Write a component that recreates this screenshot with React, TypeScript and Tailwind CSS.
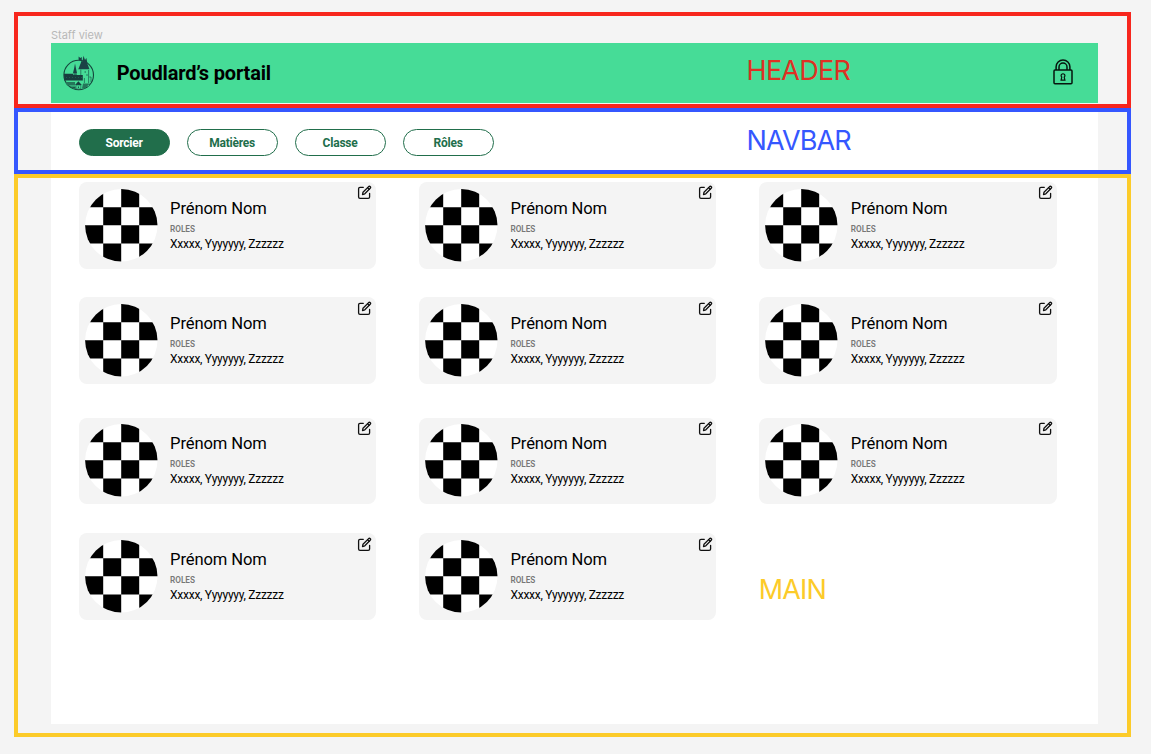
const tabs = ["Sorcier", "Matières", "Classe", "Rôles"];
const rows = [3, 3, 3, 2];

function CastleLogo() {
  return (
    <svg className="h-9 w-8 shrink-0" viewBox="0 0 32 36" fill="none">
      <circle cx="15.7" cy="20" r="14.8" stroke="#16463d" strokeWidth="1.1" />
      <path d="M17.8 14H25.8V31L18.5 33Z" fill="#46dc97" />
      <path d="M15.3 14.3L17.8 8L18.6 5.5L19.4 6.5L20.5 .8L22 5L23.4 3L24.5 9L26.5 14.3Z" fill="#1b4146" />
      <path d="M15.6 4.8V1.5L17.3 3L18.8 2V5L17.2 5.6Z" fill="#1b4146" />
      <path d="M12 8.5L13 13.5L14 18H10L11.1 13.5Z" fill="#1b4146" />
      <path d="M10.4 18H13.8V20.5H10.4Z" fill="#287d62" />
      <path d="M1 18.8H10V20H19.8V25.5H1.3Z" fill="#173d3e" />
      <path d="M3 22.5H19" stroke="#2e8f6c" strokeWidth=".4" strokeDasharray="1 2" />
      <path d="M17.8 14.5V20M25.6 15V28M22.2 16V18M21.4 23V28M26.3 22H28V27M23 20H25" stroke="#1b5a4b" strokeWidth=".7" />
      <path d="M2 27H12V30.5H4ZM20 28.5H26.8L22 33.5H19Z" fill="#25765a" />
      <path d="M12 30L15.4 26.3L18.8 30Z" fill="#173d3e" />
      <path d="M13 30H17.8V34H13Z" fill="#46dc97" stroke="#1b5a4b" strokeWidth=".6" />
      <path d="M14.9 31.5H16V33H14.9ZM6 31.5H12.5V34Z" fill="#1b5a4b" />
    </svg>
  );
}

function LockIcon() {
  return (
    <svg className="-mt-[2px] h-[26px] w-5 shrink-0" viewBox="0 0 20 26" fill="none" stroke="#07150e" strokeWidth="1.5">
      <rect x="1" y="11.1" width="18" height="13.6" rx="1" />
      <path d="M3.1 11V7.8A6.9 6.8 0 0 1 16.9 7.8V11M6 11V8A4 4 0 0 1 14 8V11" />
      <path d="M8.8 18.1A1.9 1.9 0 1 1 11.2 18.1L11.9 21.2H8.1Z" strokeWidth="1.2" />
    </svg>
  );
}

function EditIcon() {
  return (
    <svg className="absolute right-[3.5px] top-[3.4px] h-[15px] w-[15px]" viewBox="0 0 15 15" fill="none" stroke="#111" strokeWidth="1.3" strokeLinecap="round" strokeLinejoin="round">
      <path d="M6.3 2.3H3Q1.6 2.3 1.6 3.7V11.9Q1.6 13.3 3 13.3H11.2Q12.6 13.3 12.6 11.9V8.5" />
      <path d="M5.5 9.6L6 7.2L11.6 1.6Q12.5.8 13.3 1.6Q14 2.4 13.2 3.2L7.8 8.8Z" />
      <path d="M10.6 2.8L12.1 4.3" />
    </svg>
  );
}

function Avatar() {
  return (
    <svg className="h-[73px] w-[73px] shrink-0" viewBox="0 0 73 73">
      <clipPath id="avatar-circle">
        <circle cx="36.3" cy="36.3" r="36.2" />
      </clipPath>
      <g clipPath="url(#avatar-circle)">
        <path fill="#fff" d="M0 0H73V73H0Z" />
        <path d="M0 0H18.2V18.2H0ZM36.2 0H54.2V18.2H36.2ZM18.2 18.2H36.2V36.3H18.2ZM54.2 18.2H73V36.3H54.2ZM0 36.3H18.2V54.5H0ZM36.2 36.3H54.2V54.5H36.2ZM18.2 54.5H36.2V73H18.2ZM54.2 54.5H73V73H54.2Z" />
      </g>
    </svg>
  );
}

function Card() {
  return (
    <article className="relative flex h-[86.6px] rounded-[8px] bg-[#f4f4f4] pl-[6.1px] pt-[6.5px]">
      <Avatar />
      <div className="ml-[12.4px] pt-[10px] text-black">
        <h2 className="text-[16.6px] leading-5 tracking-[-0.13px]">Prénom Nom</h2>
        <p className="mt-[5px] text-[8.2px] font-semibold leading-[10px] tracking-[-0.02px] text-[#777]">ROLES</p>
        <p className="mt-[3px] text-[12px] leading-[14px] tracking-[-0.27px]">Xxxxx, Yyyyyyy, Zzzzzz</p>
      </div>
      <EditIcon />
    </article>
  );
}

export default function App() {
  return (
    <div className="h-[754px] w-[1151px] overflow-hidden bg-[#f4f4f4] pl-[14px] pt-3 font-['Roboto',sans-serif]">
      <section className="h-24 w-[1117px] border-4 border-[#f7261d] px-[32.6px] pt-3">
        <p className="h-[15px] pl-[0.4px] font-['Inter',sans-serif] text-[11px] leading-[15px] text-[#b8b8b8]">Staff view</p>
        <header className="flex h-[60px] w-[1047.7px] items-center bg-[#46dc97] pl-[12px] pr-[25.7px]">
          <CastleLogo />
          <h1 className="-mt-[1px] ml-[22.2px] w-[629.8px] text-[20px] font-bold leading-6 tracking-[-0.17px] text-black">Poudlard’s portail</h1>
          <span className="-mt-[5px] flex-1 font-['Inter',sans-serif] text-[27px] leading-8 tracking-[-0.75px] text-[#df3023]">HEADER</span>
          <LockIcon />
        </header>
      </section>

      <section className="h-[66px] w-[1117px] border-4 border-[#3557ff] px-[32.6px]">
        <nav className="flex h-full w-[1047.7px] items-center bg-white pl-[28px]">
          <div className="flex w-[667.9px] gap-[17px] pt-[3px]">
            {tabs.map((tab, i) => (
              <button
                key={tab}
                className={
                  i === 0
                    ? "h-[27px] w-[91px] rounded-full border border-[#216e4b] bg-[#216e4b] text-[12px] font-bold leading-[14px] tracking-[-0.22px] text-white"
                    : "h-[27px] w-[91px] rounded-full border border-[#216e4b] bg-white text-[12px] font-bold leading-[14px] tracking-[-0.22px] text-[#216e4b]"
                }
              >
                {tab}
              </button>
            ))}
          </div>
          <span className="font-['Inter',sans-serif] text-[27px] leading-8 tracking-[-0.85px] text-[#3557ff]">NAVBAR</span>
        </nav>
      </section>

      <section className="h-[563px] w-[1117px] border-4 border-[#fccb29] px-[32.6px]">
        <main className="h-[546px] w-[1047.7px] bg-white pl-[28px] pt-[4px]">
          <div className="flex w-[978px] flex-col">
            {rows.map((count, row) => (
              <div
                key={row}
                className={
                  row === 0
                    ? "grid grid-cols-[repeat(3,297.2px)] gap-x-[43.2px]"
                    : row === 2
                      ? "mt-[33.8px] grid grid-cols-[repeat(3,297.2px)] gap-x-[43.2px]"
                      : "mt-[28.8px] grid grid-cols-[repeat(3,297.2px)] gap-x-[43.2px]"
                }
              >
                {Array.from({ length: count }, (_, i) => (
                  <Card key={i} />
                ))}
                {count === 2 && (
                  <span className="-ml-[0.5px] pt-[41px] font-['Inter',sans-serif] text-[27px] leading-8 tracking-[-0.9px] text-[#fccb29]">MAIN</span>
                )}
              </div>
            ))}
          </div>
        </main>
      </section>
    </div>
  );
}
